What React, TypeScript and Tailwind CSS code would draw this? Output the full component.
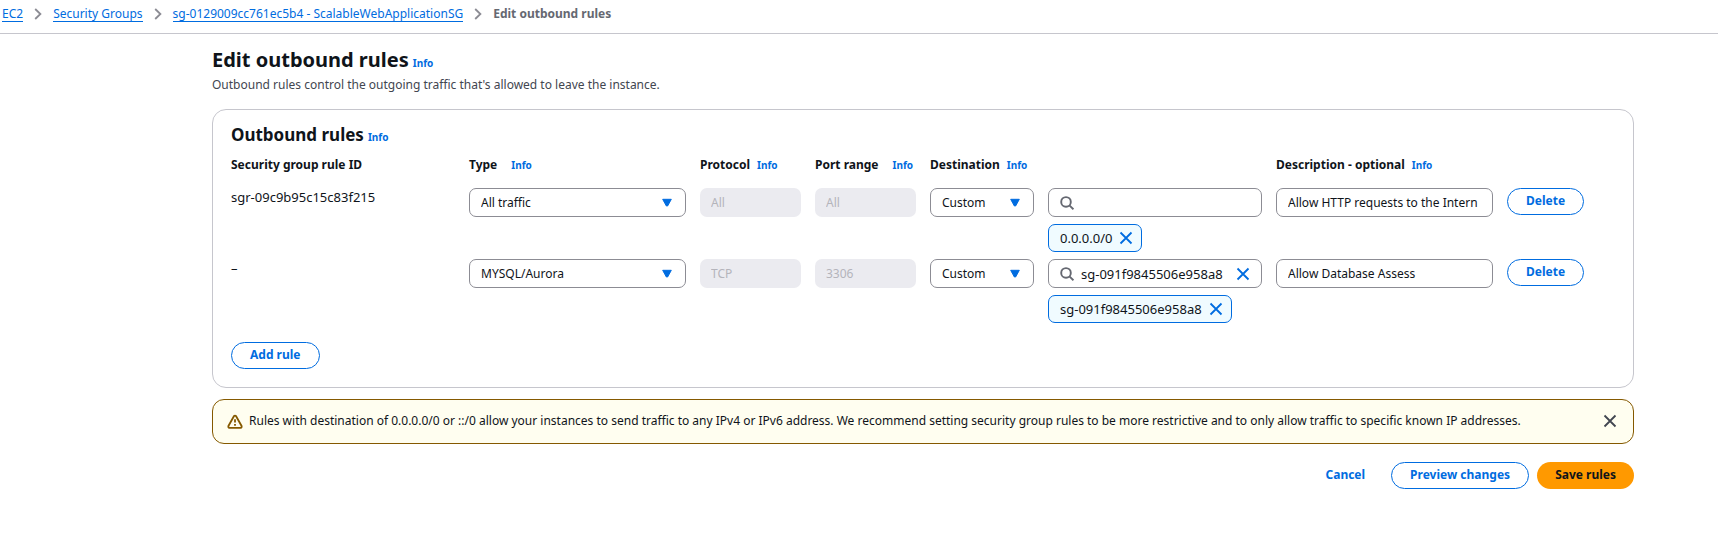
import { Fragment } from "react";
import type { ReactNode } from "react";

interface Rule {
  id: string;
  type: string;
  protocol: string;
  port: string;
  search: string;
  token: string;
  description: string;
}

const rules: Rule[] = [
  {
    id: "sgr-09c9b95c15c83f215",
    type: "All traffic",
    protocol: "All",
    port: "All",
    search: "",
    token: "0.0.0.0/0",
    description: "Allow HTTP requests to the Intern",
  },
  {
    id: "–",
    type: "MYSQL/Aurora",
    protocol: "TCP",
    port: "3306",
    search: "sg-091f9845506e958a8",
    token: "sg-091f9845506e958a8",
    description: "Allow Database Assess",
  },
];

const trail = ["EC2", "Security Groups", "sg-0129009cc761ec5b4 - ScalableWebApplicationSG"];

const row =
  "grid grid-cols-[minmax(0,224fr)_minmax(0,217fr)_minmax(0,101fr)_minmax(0,101fr)_minmax(0,104fr)_minmax(0,214fr)_minmax(0,217fr)_minmax(0,108fr)] gap-x-[14px]";

const field =
  "block h-[29px] w-full rounded-[7px] border border-[#8c8c94] bg-white px-[11px] text-[#0f141a]";

const disabledField = "block h-[29px] w-full rounded-[7px] bg-[#ebebf0] px-[11px] text-[#b4b4bb]";

const outlineButton =
  "h-[27px] rounded-full border border-[#006ce0] bg-white px-[18px] pb-px font-bold text-[#006ce0]";

function InfoLink({ className = "ml-[7px]" }: { className?: string }) {
  return (
    <a href="#info" className={`text-[10px] font-bold text-[#006ce0] ${className}`}>
      Info
    </a>
  );
}

function CloseIcon() {
  return (
    <svg viewBox="0 0 14 14" className="block size-[14px]" fill="none" stroke="currentColor" strokeWidth="1.8" aria-hidden="true">
      <path d="M1.5 1.5l11 11M12.5 1.5l-11 11" />
    </svg>
  );
}

function SearchIcon() {
  return (
    <svg viewBox="0 0 14 14" className="block size-[14px] shrink-0" fill="none" stroke="#656871" strokeWidth="1.9" aria-hidden="true">
      <circle cx="6" cy="5.9" r="4.8" />
      <path d="M9.4 9.3l4 4" />
    </svg>
  );
}

function WarningIcon() {
  return (
    <svg viewBox="0 0 16 16" className="block size-[16px] shrink-0" fill="none" stroke="#855900" strokeWidth="1.8" strokeLinejoin="round" aria-hidden="true">
      <path d="M6.9 2.2Q8 0.9 9.1 2.2L14.6 12Q15 13.6 13.6 13.8H2.4Q1 13.6 1.4 12z" />
      <path d="M8 5.2v3.4M8 9.9v1.8" />
    </svg>
  );
}

function Select({ label, value }: { label: string; value: string }) {
  return (
    <div className="relative">
      <select aria-label={label} defaultValue={value} className={`${field} appearance-none pr-8`}>
        <option>{value}</option>
      </select>
      <svg
        viewBox="0 0 10 9"
        className="pointer-events-none absolute right-[14px] top-[10px] h-[9px] w-[10px]"
        fill="#006ce0"
        stroke="#006ce0"
        strokeWidth="1"
        strokeLinejoin="round"
        aria-hidden="true"
      >
        <path d="M0.7 1.3H9.3L5.6 8H4.4z" />
      </svg>
    </div>
  );
}

function HeaderCell({ children, className = "" }: { children: ReactNode; className?: string }) {
  return (
    <th scope="col" className={`whitespace-nowrap text-left font-bold ${className}`}>
      {children}
    </th>
  );
}

function RuleRow({ rule }: { rule: Rule }) {
  return (
    <tr className={row}>
      <td className="whitespace-nowrap text-[13px]">{rule.id}</td>
      <td>
        <Select label="Type" value={rule.type} />
      </td>
      <td>
        <input aria-label="Protocol" disabled defaultValue={rule.protocol} className={disabledField} />
      </td>
      <td>
        <input aria-label="Port range" disabled defaultValue={rule.port} className={disabledField} />
      </td>
      <td>
        <Select label="Destination type" value="Custom" />
      </td>
      <td>
        <div className="flex h-[29px] items-center gap-[7px] rounded-[7px] border border-[#8c8c94] px-[11px] text-[13px]">
          <SearchIcon />
          <input aria-label="Destination" defaultValue={rule.search} className="min-w-0 flex-1 bg-transparent outline-none" />
          {rule.search && (
            <button type="button" aria-label="Clear" className="text-[#006ce0]">
              <CloseIcon />
            </button>
          )}
        </div>
        <div className="mt-[7px] flex h-7 w-fit items-center gap-[7px] whitespace-nowrap rounded-[7px] border border-[#006ce0] bg-[#f0fbff] pl-[11px] pr-2 text-[13px]">
          <span className="pb-px">{rule.token}</span>
          <button type="button" aria-label={`Remove ${rule.token}`} className="text-[#006ce0]">
            <CloseIcon />
          </button>
        </div>
      </td>
      <td>
        <input aria-label="Description" defaultValue={rule.description} className={field} />
      </td>
      <td>
        <button type="button" className={outlineButton}>
          Delete
        </button>
      </td>
    </tr>
  );
}

export default function App() {
  return (
    <div className="min-h-screen bg-white font-['Noto_Sans',sans-serif] text-[12px] leading-[18px] text-[#0f141a]">
      <nav aria-label="Breadcrumb" className="flex h-[34px] items-start border-b border-[#c6c6cd] pl-[2px] pt-[5px]">
        <ol className="flex items-start whitespace-nowrap">
          {trail.map((item) => (
            <Fragment key={item}>
              <li>
                <a href="#trail" className="block h-[17px] border-b border-[#006ce0] text-[#006ce0]">
                  {item}
                </a>
              </li>
              <li aria-hidden="true" className="px-[11px] pt-[3px]">
                <svg viewBox="0 0 8 12" className="block h-3 w-2" fill="none" stroke="#8c8c94" strokeWidth="1.8">
                  <path d="M1.2 1L6.4 6L1.2 11" />
                </svg>
              </li>
            </Fragment>
          ))}
          <li aria-current="page" className="font-bold text-[#656871]">
            Edit outbound rules
          </li>
        </ol>
      </nav>

      <main className="pl-[212px] pr-[84px] pt-[14px]">
        <h1 className="text-[20px] font-bold leading-6">
          Edit outbound rules
          <InfoLink className="ml-1" />
        </h1>
        <p className="mt-px text-[#424650]">
          Outbound rules control the outgoing traffic that's allowed to leave the instance.
        </p>

        <section className="mt-[15px] rounded-[14px] border border-[#c6c6cd] px-[18px] pb-[18px] pt-[14px]">
          <h2 className="text-[17px] font-bold leading-[22px]">
            Outbound rules
            <InfoLink className="ml-1" />
          </h2>
          <table className="mt-2 block">
            <thead className="block">
              <tr className={row}>
                <HeaderCell>Security group rule ID</HeaderCell>
                <HeaderCell>
                  Type
                  <InfoLink className="ml-[14px]" />
                </HeaderCell>
                <HeaderCell>
                  Protocol
                  <InfoLink />
                </HeaderCell>
                <HeaderCell>
                  Port range
                  <InfoLink className="ml-[14px]" />
                </HeaderCell>
                <HeaderCell className="col-span-2">
                  Destination
                  <InfoLink />
                </HeaderCell>
                <HeaderCell>
                  Description - optional
                  <InfoLink />
                </HeaderCell>
              </tr>
            </thead>
            <tbody className="mt-[14px] flex flex-col gap-[7px]">
              {rules.map((rule) => (
                <RuleRow key={rule.id} rule={rule} />
              ))}
            </tbody>
          </table>
          <button type="button" className={`${outlineButton} mt-[19px]`}>
            Add rule
          </button>
        </section>

        <div role="status" className="mt-[11px] flex min-h-[45px] items-center rounded-[12px] border border-[#855900] bg-[#fffef0] pl-[14px] pr-4">
          <WarningIcon />
          <p className="ml-[6px] flex-1 pb-[2px]">
            Rules with destination of 0.0.0.0/0 or ::/0 allow your instances to send traffic to any IPv4 or IPv6 address. We
            recommend setting security group rules to be more restrictive and to only allow traffic to specific known IP
            addresses.
          </p>
          <button type="button" aria-label="Dismiss" className="pb-[2px] text-[#424650]">
            <CloseIcon />
          </button>
        </div>

        <div className="mt-[18px] flex justify-end gap-2 pb-6">
          <button type="button" className="h-[27px] px-[18px] pb-px font-bold text-[#006ce0]">
            Cancel
          </button>
          <button type="button" className={outlineButton}>
            Preview changes
          </button>
          <button type="button" className="h-[27px] rounded-full bg-[#ff9900] px-[18px] pb-px font-bold text-[#0f141a]">
            Save rules
          </button>
        </div>
      </main>
    </div>
  );
}
